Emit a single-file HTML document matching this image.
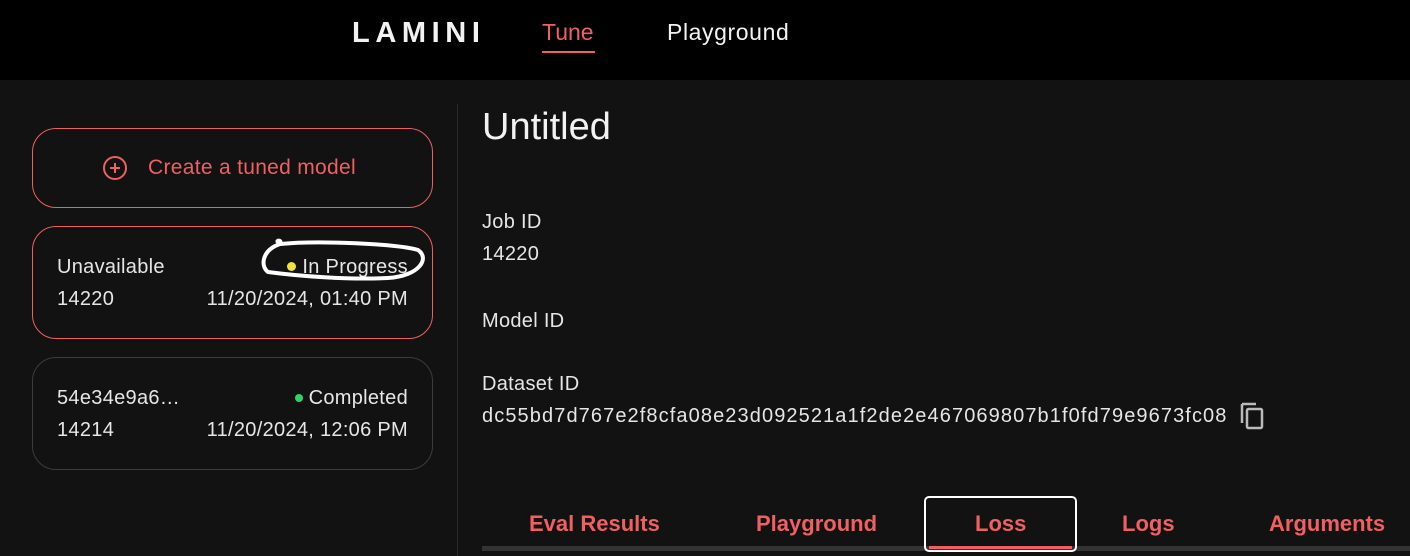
<!DOCTYPE html>
<html><head><meta charset="utf-8"><style>
*{margin:0;padding:0;box-sizing:border-box}
body{width:1410px;height:556px;background:#121212;font-family:"Liberation Sans",sans-serif;color:#e6e6e6;position:relative;overflow:hidden}
.hdr{position:absolute;left:0;top:0;width:1410px;height:80px;background:#000}
.abs{position:absolute;white-space:nowrap}
.red{color:#f05f62}
.card{position:absolute;left:32px;width:401px;border-radius:24px;border:1px solid #f05f62}
.t{font-size:20px;letter-spacing:0.3px}
.dot{display:inline-block;width:9px;height:9px;border-radius:50%;margin-right:6px;vertical-align:2px}
.tab{font-size:22px;font-weight:bold;top:511px}
</style></head><body>
<div class="hdr"></div>
<div class="abs" style="left:352px;top:17px;font-size:29px;font-weight:bold;letter-spacing:5.6px;color:#f2f2f2">LAMINI</div>
<div class="abs red" style="left:542px;top:19px;font-size:23px">Tune</div>
<div class="abs" style="left:542px;top:51px;width:53px;height:2px;background:#f05f62"></div>
<div class="abs" style="left:667px;top:19px;font-size:23px;letter-spacing:0.6px;color:#f2f2f2">Playground</div>
<div class="abs" style="left:457px;top:104px;width:1px;height:452px;background:#2a2a2a"></div>

<div class="card" style="top:128px;height:80px"></div>
<svg class="abs" style="left:102px;top:155px" width="26" height="26" viewBox="0 0 26 26"><circle cx="13" cy="13" r="11" fill="none" stroke="#f05f62" stroke-width="2"/><path d="M13 8v10M8 13h10" stroke="#f05f62" stroke-width="2"/></svg>
<div class="abs red" style="left:148px;top:156px;font-size:21px;letter-spacing:0.3px">Create a tuned model</div>

<div class="card" style="top:226px;height:113px"></div>
<div class="abs t" style="left:57px;top:256px">Unavailable</div>
<div class="abs t" style="left:57px;top:288px">14220</div>
<div class="abs t" style="right:1002px;top:256px"><span class="dot" style="background:#f3e23a"></span>In Progress</div>
<div class="abs t" style="right:1002px;top:288px">11/20/2024, 01:40 PM</div>
<svg class="abs" style="left:258px;top:236px" width="170" height="48" viewBox="0 0 170 48"><path d="M22 8 C60 4 140 8 160 14 C172 22 162 40 130 42 C90 44 40 40 10 36 C2 30 4 14 22 8 C15 4 25 3 22 8" fill="none" stroke="#fff" stroke-width="4"/></svg>

<div class="card" style="top:357px;height:113px;border-color:#3c3c3c"></div>
<div class="abs t" style="left:57px;top:387px">54e34e9a6…</div>
<div class="abs t" style="left:57px;top:419px">14214</div>
<div class="abs t" style="right:1002px;top:387px"><span class="dot" style="background:#2bd46a;width:8px;height:8px"></span>Completed</div>
<div class="abs t" style="right:1002px;top:419px">11/20/2024, 12:06 PM</div>

<div class="abs" style="left:482px;top:106px;font-size:38px;color:#f2f2f2">Untitled</div>
<div class="abs t" style="left:482px;top:211px">Job ID</div>
<div class="abs t" style="left:482px;top:243px">14220</div>
<div class="abs t" style="left:482px;top:310px">Model ID</div>
<div class="abs t" style="left:482px;top:373px">Dataset ID</div>
<div class="abs t" style="left:482px;top:405px;letter-spacing:1.1px">dc55bd7d767e2f8cfa08e23d092521a1f2de2e467069807b1f0fd79e9673fc08</div>
<svg class="abs" style="left:1239px;top:401px" width="28" height="30" viewBox="0 0 28 30"><path d="M3 3v19M3 3h14" stroke="#bbb" stroke-width="2.5" fill="none"/><rect x="8" y="8" width="15" height="19" rx="1.5" stroke="#bbb" stroke-width="2.5" fill="none"/></svg>

<div class="abs" style="left:482px;top:546px;width:928px;height:5px;background:#333"></div>
<div class="abs red tab" style="left:529px">Eval Results</div>
<div class="abs red tab" style="left:756px">Playground</div>
<div class="abs" style="left:924px;top:496px;width:153px;height:56px;border:2px solid #fff;border-radius:5px"></div>
<div class="abs" style="left:929px;top:546px;width:143px;height:3px;background:#f05f62"></div>
<div class="abs red tab" style="left:975px">Loss</div>
<div class="abs red tab" style="left:1122px">Logs</div>
<div class="abs red tab" style="left:1269px">Arguments</div>
</body></html>
